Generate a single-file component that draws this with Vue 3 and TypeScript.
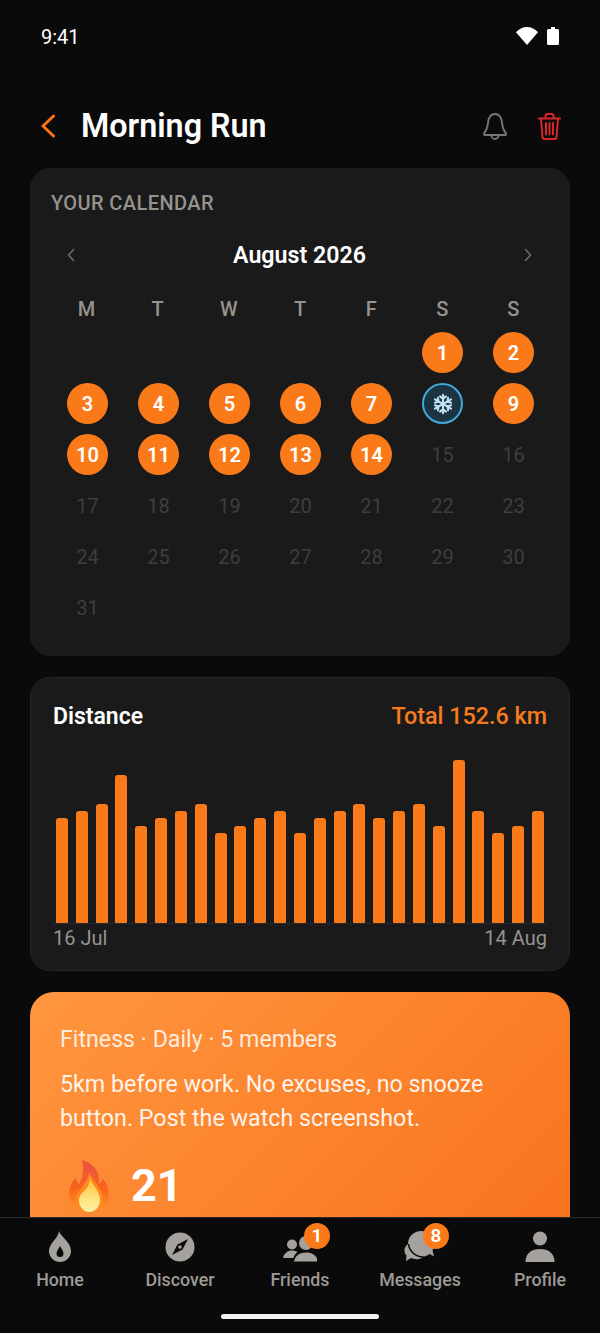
<script setup lang="ts">
const weekdays: string[] = ['M', 'T', 'W', 'T', 'F', 'S', 'S']
const blanks: number[] = [1, 2, 3, 4, 5]
const days: number[] = Array.from({ length: 31 }, (_, i) => i + 1)
const barHeights: number[] = [105, 112, 119, 148, 97, 105, 112, 119, 90, 97, 105, 112, 90, 105, 112, 119, 105, 112, 119, 97, 163, 112, 90, 97, 112]
function dayClass(d: number): string {
  if (d === 8) return 'frozen'
  return d <= 14 ? 'done' : 'future'
}
</script>

<template>
  <div class="screen">
    <div class="status">
      <span class="time">9:41</span>
      <div class="status-icons">
        <svg width="22" height="18" viewBox="0 0 22 18"><path d="M11 18 0 5.2C3 2 6.800 0 11 0s8 2 11 5.200z" fill="#fff" /></svg>
        <svg width="12" height="18" viewBox="0 0 12 18"><path d="M4 0h4v2h2.500A1.500 1.500 0 0 1 12 3.500V16.500A1.500 1.500 0 0 1 10.500 18H1.500A1.500 1.500 0 0 1 0 16.500V3.500A1.500 1.500 0 0 1 1.500 2H4z" fill="#fff" /></svg>
      </div>
    </div>

    <header class="header">
      <svg class="back" width="15" height="24" viewBox="0 0 15 24"><path d="M12.500 2 2 12 12.500 22" fill="none" stroke="#f97316" stroke-width="3" stroke-linecap="round" stroke-linejoin="round" /></svg>
      <h1 class="title">Morning Run</h1>
      <div class="actions">
        <svg width="24" height="27" viewBox="0 0 24 27" fill="none" stroke="#7a7875" stroke-width="1.800" stroke-linejoin="round">
          <path d="M12 1C7.500 1 5.500 5 5 10c-.4 5-2 8-4 10.500-.5.800 0 1.500.8 1.500h20.400c.8 0 1.300-.7.800-1.500-2-2.500-3.600-5.500-4-10.500C18.500 5 16.500 1 12 1z" />
          <path d="M8.500 22.500a3.500 3.500 0 0 0 7 0" />
        </svg>
        <svg width="23" height="27" viewBox="0 0 23 27" fill="none" stroke="#d9262b" stroke-width="2" stroke-linecap="round" stroke-linejoin="round">
          <path d="M1 5.500h21M7.500 5V3a2 2 0 0 1 2-2h4a2 2 0 0 1 2 2v2" />
          <path d="M3 6l1.500 18a2 2 0 0 0 2 2h10a2 2 0 0 0 2-2L20 6" />
          <path d="M8 10v11.500M11.500 10v11.500M15 10v11.500" />
        </svg>
      </div>
    </header>

    <main class="content">
      <section class="card calendar">
        <h2 class="cal-title">YOUR CALENDAR</h2>
        <div class="month-row">
          <svg width="8" height="14" viewBox="0 0 8 14"><path d="M6.500 1.500 1.500 7l5 5.500" fill="none" stroke="#6e6c69" stroke-width="1.600" stroke-linecap="round" stroke-linejoin="round" /></svg>
          <span class="month">August 2026</span>
          <svg width="8" height="14" viewBox="0 0 8 14"><path d="M1.500 1.500 6.500 7l-5 5.500" fill="none" stroke="#6e6c69" stroke-width="1.600" stroke-linecap="round" stroke-linejoin="round" /></svg>
        </div>
        <div class="weekdays">
          <span v-for="(w, i) in weekdays" :key="i">{{ w }}</span>
        </div>
        <div class="days">
          <span v-for="b in blanks" :key="'b' + b" class="cell"></span>
          <span v-for="d in days" :key="d" class="cell">
            <span class="day" :class="dayClass(d)">
              <svg v-if="d === 8" width="22" height="22" viewBox="-13 -13 26 26" fill="none" stroke="#bfe3f7" stroke-width="2.400" stroke-linecap="round">
                <g v-for="a in [0, 60, 120, 180, 240, 300]" :key="a" :transform="`rotate(${a})`">
                  <path d="M0 0V-11M-3.500 -9 0 -6 3.500 -9" />
                </g>
              </svg>
              <template v-else>{{ d }}</template>
            </span>
          </span>
        </div>
      </section>

      <section class="card distance">
        <div class="dist-head">
          <span class="dist-title">Distance</span>
          <span class="dist-total">Total 152.6 km</span>
        </div>
        <div class="chart">
          <span v-for="(h, i) in barHeights" :key="i" class="bar" :style="{ height: h + 'px' }"></span>
        </div>
        <div class="axis">
          <span>16 Jul</span>
          <span>14 Aug</span>
        </div>
      </section>

      <section class="hero">
        <p class="hero-meta">Fitness · Daily · 5 members</p>
        <p class="hero-desc">5km before work. No excuses, no snooze button. Post the watch screenshot.</p>
        <div class="streak">
          <svg width="42" height="52" viewBox="0 0 42 52">
            <defs>
              <linearGradient id="fl-o" x1="0" y1="0" x2="0" y2="1">
                <stop offset="0" stop-color="#ea4f45" />
                <stop offset=".55" stop-color="#f9641c" />
                <stop offset="1" stop-color="#ff9a22" />
              </linearGradient>
              <linearGradient id="fl-i" x1="0" y1="0" x2="0" y2="1">
                <stop offset="0" stop-color="#ffc53d" />
                <stop offset="1" stop-color="#fff3a8" />
              </linearGradient>
            </defs>
            <path d="M13 0c8 2 17 9 17 19 0 2 0 3-1 5 2-1 4-3 5-5 4 5 6 10 6 15 0 11-9 18-20 18S0 45 0 34c0-7 3-12 7-17 0 3 1 6 3 7 3-6 6-14 3-24z" fill="url(#fl-o)" />
            <path d="M20 12c2 7 14 16 14 28 0 7-6 12-13.500 12S7 47 7 40c0-6 4-10 7-14 3-4 6-9 6-14z" fill="#ff8a1e" />
            <path d="M21 18c1 6 10 12 10 22 0 7-5 12-10.500 12S10 47 10 41c0-5 3-8 6-11 3-3 5-7 5-12z" fill="url(#fl-i)" />
          </svg>
          <span class="streak-num">21</span>
        </div>
      </section>
    </main>

    <nav class="tabs">
      <div class="tab">
        <div class="tab-icon">
          <svg width="22" height="31" viewBox="0 0 22 31">
            <path d="M10 0c1 5 12 11 12 20a11 11 0 0 1-22 0C0 12 9 8 10 0z" fill="#a5a29e" />
            <path d="M11 15c1 2 3.500 5 3.500 7.500a3.500 3.500 0 0 1-7 0C7.500 20 10 17 11 15z" fill="#0a0a0a" />
          </svg>
        </div>
        <span>Home</span>
      </div>
      <div class="tab">
        <div class="tab-icon">
          <svg width="30" height="30" viewBox="0 0 30 30">
            <circle cx="15" cy="15" r="14.500" fill="#a5a29e" />
            <path d="M23 7 17.500 17.500 7 23l5.500-10.500z" fill="#0a0a0a" />
            <circle cx="15" cy="15" r="1.800" fill="#a5a29e" />
          </svg>
        </div>
        <span>Discover</span>
      </div>
      <div class="tab">
        <div class="tab-icon">
          <svg width="34" height="30" viewBox="0 0 34 30">
            <circle cx="9" cy="12.500" r="5" fill="#a5a29e" />
            <path d="M0 26c1-5 5-7.500 9-7.500 2 0 4 .5 5.500 1.500-2 1.500-3.500 3.500-4 6z" fill="#a5a29e" />
            <circle cx="23" cy="11" r="7" fill="#a5a29e" />
            <path d="M11 29.500c1-6 6-9 12-9s11 3 12 9z" fill="#a5a29e" />
          </svg>
          <span class="badge">1</span>
        </div>
        <span>Friends</span>
      </div>
      <div class="tab">
        <div class="tab-icon">
          <svg width="32" height="31" viewBox="0 0 32 31">
            <path d="M5 12C2 14 0 17 .5 20c.2 2 1 3.500 2 4.500L2 30l5-3c2 1 5 1.500 8 1 2-.3 3-1 4-2C12 26 6 20 5 12z" fill="#a5a29e" />
            <circle cx="17" cy="13" r="13" fill="#a5a29e" />
            <path d="M24 22l6 3.500-2-8z" fill="#a5a29e" />
            <path d="M4.500 13c.5 6 6 13 15 13" fill="none" stroke="#0a0a0a" stroke-width="1.500" />
          </svg>
          <span class="badge">8</span>
        </div>
        <span>Messages</span>
      </div>
      <div class="tab">
        <div class="tab-icon">
          <svg width="30" height="31" viewBox="0 0 30 31">
            <circle cx="15" cy="7.500" r="7" fill="#a5a29e" />
            <path d="M.5 31c0-9 6-13 14.500-13s14.500 4 14.500 13z" fill="#a5a29e" />
          </svg>
        </div>
        <span>Profile</span>
      </div>
      <div class="indicator"></div>
    </nav>
  </div>
</template>

<style>
html, body {
  margin: 0;
  background: #0a0a0a;
}
</style>

<style scoped>
.screen {
  width: 600px;
  height: 1333px;
  display: flex;
  flex-direction: column;
  overflow: hidden;
  background: #0a0a0a;
  color: #fff;
  font-family: Roboto, "Liberation Sans", sans-serif;
}
.status {
  height: 73px;
  flex: none;
  display: flex;
  align-items: center;
  justify-content: space-between;
  padding: 0 41px;
}
.time {
  font-size: 20px;
  color: #fff;
}
.status-icons {
  display: flex;
  align-items: center;
  gap: 9px;
  margin-bottom: 1px;
}
.header {
  flex: none;
  height: 60px;
  margin: 23px 0 12px;
  padding: 0 39px 0 41px;
  display: flex;
  align-items: center;
}
.title {
  margin: 0 0 0 25px;
  font-size: 32.300px;
  font-weight: 600;
  flex: 1;
}
.actions {
  display: flex;
  align-items: center;
  gap: 31px;
}
.content {
  flex: 1;
  min-height: 0;
  overflow: hidden;
  display: flex;
  flex-direction: column;
  gap: 21px;
  padding: 0 30px;
}
.card {
  flex: none;
  box-sizing: border-box;
  background: #1a1a1a;
  border: 1px solid #262626;
}
.calendar {
  height: 488px;
  border-radius: 20px;
  padding: 22px 20px 0;
  border-color: #1e1e1e;
}
.cal-title {
  margin: 0;
  font-size: 20px;
  line-height: 24px;
  font-weight: 500;
  letter-spacing: 0.4px;
  color: #96938e;
}
.month-row {
  margin-top: 24px;
  height: 32px;
  padding: 0 17px 0 16px;
  display: flex;
  align-items: center;
  justify-content: space-between;
}
.month {
  font-size: 23.200px;
  font-weight: 600;
}
.weekdays {
  margin-top: 26px;
  display: grid;
  grid-template-columns: repeat(7, 1fr);
  text-align: center;
  font-size: 20px;
  line-height: 24px;
  font-weight: 500;
  color: #96938e;
}
.days {
  margin-top: 6px;
  padding-left: 1px;
  display: grid;
  grid-template-columns: repeat(7, 1fr);
  grid-auto-rows: 51px;
}
.cell {
  display: flex;
  align-items: center;
  justify-content: center;
}
.day {
  box-sizing: border-box;
  width: 41px;
  height: 41px;
  border-radius: 50%;
  display: flex;
  align-items: center;
  justify-content: center;
  font-size: 20px;
}
.done {
  background: #fa7a1a;
  color: #fff;
  font-weight: 600;
}
.frozen {
  background: #1c3442;
  border: 2px solid #3fa9dc;
}
.future {
  color: #3f3e3c;
}
.distance {
  height: 294px;
  border-radius: 20px;
  padding: 23px 22px 0;
}
.dist-head {
  display: flex;
  justify-content: space-between;
  align-items: center;
  height: 30px;
  font-size: 23px;
}
.dist-title {
  font-weight: 600;
}
.dist-total {
  color: #f77a1c;
  font-weight: 500;
  font-size: 23.300px;
}
.chart {
  height: 192px;
  padding: 0 3px;
  display: flex;
  align-items: flex-end;
  justify-content: space-between;
  border-bottom: 1px solid #2a2a2a;
}
.bar {
  width: 12px;
  background: #fa7a1a;
  border-radius: 3px 3px 1px 1px;
}
.axis {
  display: flex;
  justify-content: space-between;
  font-size: 20px;
  line-height: 28px;
  color: #96938e;
}
.hero {
  flex: none;
  height: 300px;
  box-sizing: border-box;
  border-radius: 24px;
  padding: 31px 30px 0;
  background: linear-gradient(135deg, #ff963f 0%, #f8701a 100%);
}
.hero-meta {
  margin: 0;
  font-size: 23.200px;
  line-height: 32px;
  color: rgba(255, 255, 255, 0.85);
}
.hero-desc {
  margin: 12px 0 0;
  font-size: 23.250px;
  line-height: 34px;
  color: rgba(255, 255, 255, 0.92);
}
.streak {
  margin-top: 25px;
  margin-left: 9px;
  display: flex;
  align-items: center;
  gap: 20px;
}
.streak-num {
  font-size: 45px;
  line-height: 52px;
  font-weight: 700;
}
.tabs {
  flex: none;
  height: 116px;
  box-sizing: border-box;
  position: relative;
  display: grid;
  grid-template-columns: repeat(5, 1fr);
  align-items: start;
  border-top: 1px solid #2a2a2a;
  background: #0a0a0a;
}
.tab {
  display: flex;
  flex-direction: column;
  align-items: center;
  padding-top: 13px;
  font-size: 17.800px;
  line-height: 22px;
  font-weight: 500;
  color: #9d9a96;
}
.tab-icon {
  position: relative;
  height: 31px;
  margin-bottom: 7px;
  display: flex;
  align-items: flex-end;
  justify-content: center;
}
.badge {
  position: absolute;
  top: -8px;
  right: -13px;
  width: 26px;
  height: 26px;
  border-radius: 50%;
  background: #fa7a1a;
  color: #fff;
  display: flex;
  align-items: center;
  justify-content: center;
  font-size: 19px;
  font-weight: 600;
}
.indicator {
  position: absolute;
  left: 221px;
  bottom: 14px;
  width: 158px;
  height: 5px;
  border-radius: 3px;
  background: #f2f2f2;
}
</style>
